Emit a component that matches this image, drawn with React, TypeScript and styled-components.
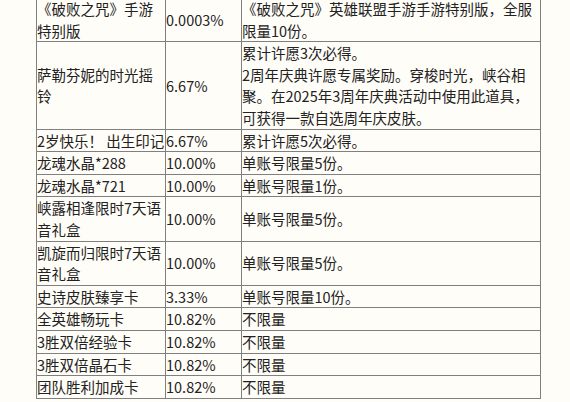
import React from "react";
import styled, { createGlobalStyle } from "styled-components";

const Global = createGlobalStyle`
  html, body {
    margin: 0;
    padding: 0;
    background: #fffdf8;
    overflow: hidden;
  }
`;

const Page = styled.div`
  padding-left: 36px;
  margin-top: -3px;
  font-family: "Noto Sans CJK SC", "Noto Sans", sans-serif;
  font-size: 14.5px;
  color: #222;
`;

const Table = styled.table`
  border-collapse: collapse;
  table-layout: fixed;
  width: 504px;
`;

const Cell = styled.td`
  border: 1px solid #808080;
  padding: 0;
  line-height: 21.6px;
  vertical-align: middle;
  word-break: break-all;
`;

const Line = styled.div``;

type Row = { name: string; rate: string; note: string[] };

const rows: Row[] = [
  {
    name: "《破败之咒》手游特别版",
    rate: "0.0003%",
    note: ["《破败之咒》英雄联盟手游手游特别版，全服限量10份。"],
  },
  {
    name: "萨勒芬妮的时光摇铃",
    rate: "6.67%",
    note: [
      "累计许愿3次必得。",
      "2周年庆典许愿专属奖励。穿梭时光，峡谷相聚。在2025年3周年庆典活动中使用此道具，可获得一款自选周年庆皮肤。",
    ],
  },
  { name: "2岁快乐！ 出生印记", rate: "6.67%", note: ["累计许愿5次必得。"] },
  { name: "龙魂水晶*288", rate: "10.00%", note: ["单账号限量5份。"] },
  { name: "龙魂水晶*721", rate: "10.00%", note: ["单账号限量1份。"] },
  { name: "峡露相逢限时7天语音礼盒", rate: "10.00%", note: ["单账号限量5份。"] },
  { name: "凯旋而归限时7天语音礼盒", rate: "10.00%", note: ["单账号限量5份。"] },
  { name: "史诗皮肤臻享卡", rate: "3.33%", note: ["单账号限量10份。"] },
  { name: "全英雄畅玩卡", rate: "10.82%", note: ["不限量"] },
  { name: "3胜双倍经验卡", rate: "10.82%", note: ["不限量"] },
  { name: "3胜双倍晶石卡", rate: "10.82%", note: ["不限量"] },
  { name: "团队胜利加成卡", rate: "10.82%", note: ["不限量"] },
];

export default function App() {
  return (
    <>
      <Global />
      <Page>
        <Table>
          <colgroup>
            <col style={{ width: 129 }} />
            <col style={{ width: 76 }} />
            <col style={{ width: 299 }} />
          </colgroup>
          <tbody>
            {rows.map((r) => (
              <tr key={r.name}>
                <Cell>{r.name}</Cell>
                <Cell>{r.rate}</Cell>
                <Cell>
                  {r.note.map((n) => (
                    <Line key={n}>{n}</Line>
                  ))}
                </Cell>
              </tr>
            ))}
          </tbody>
        </Table>
      </Page>
    </>
  );
}
